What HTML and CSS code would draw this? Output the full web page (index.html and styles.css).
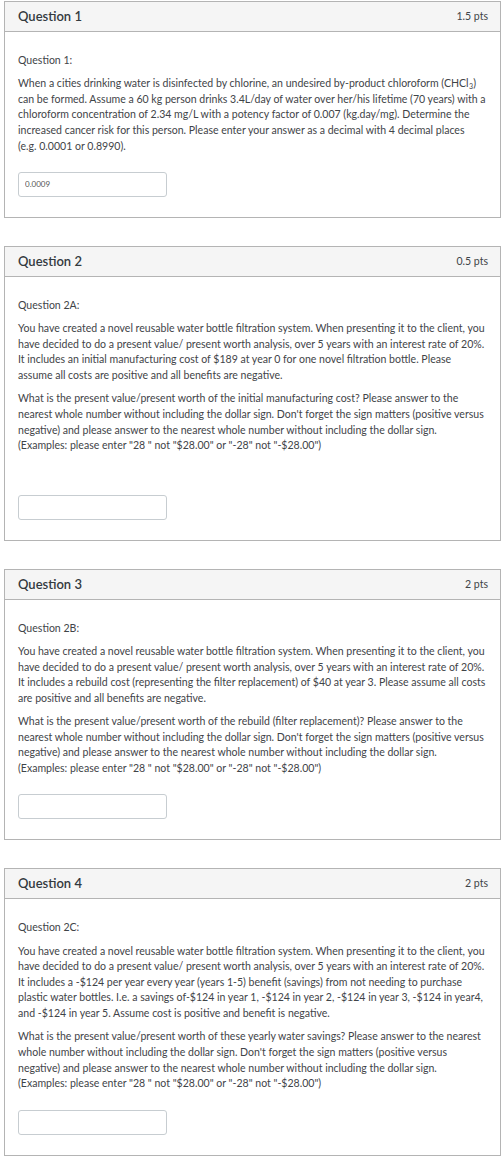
FILE: index.html
```html
<!DOCTYPE html>
<html lang="en">
<head>
<meta charset="utf-8">
<title>Quiz</title>
<link rel="stylesheet" href="styles.css">
</head>
<body>
<div class="quiz">
  <section class="question">
    <header class="q-header">
      <span class="q-name">Question 1</span>
      <span class="q-pts">1.5 pts</span>
    </header>
    <div class="q-body">
      <div class="q-text">
        <p>Question 1:</p>
        <p>When a cities drinking water is disinfected by chlorine, an undesired by-product chloroform (CHCl<sub>3</sub>) can be formed. Assume a 60 kg person drinks 3.4L/day of water over her/his lifetime (70 years) with a chloroform concentration of 2.34 mg/L with a potency factor of 0.007 (kg.day/mg). Determine the increased cancer risk for this person. Please enter your answer as a decimal with 4 decimal places (e.g.&nbsp;0.0001 or 0.8990).</p>
      </div>
      <div class="q-answer"><input class="q-input" type="text" value="0.0009"></div>
    </div>
  </section>

  <section class="question">
    <header class="q-header">
      <span class="q-name">Question 2</span>
      <span class="q-pts">0.5 pts</span>
    </header>
    <div class="q-body">
      <div class="q-text">
        <p>Question 2A:</p>
        <p>You have created a novel reusable water bottle filtration system. When presenting it to the client, you have decided to do a present value/ present worth analysis, over 5 years with an interest rate of 20%. It includes an initial manufacturing cost of $189 at year 0 for one novel filtration bottle. Please assume all costs are positive and all benefits are negative.</p>
        <p>What is the present value/present worth of the initial manufacturing cost? Please answer to the nearest whole number without including the dollar sign. Don't forget the sign matters (positive versus negative) and please answer to the nearest whole number without including the dollar sign. (Examples: please enter "28 " not "$28.00" or "-28" not "-$28.00")</p>
        <p class="empty">&nbsp;</p>
      </div>
      <div class="q-answer"><input class="q-input" type="text"></div>
    </div>
  </section>

  <section class="question">
    <header class="q-header">
      <span class="q-name">Question 3</span>
      <span class="q-pts">2 pts</span>
    </header>
    <div class="q-body">
      <div class="q-text">
        <p>Question 2B:</p>
        <p>You have created a novel reusable water bottle filtration system. When presenting it to the client, you have decided to do a present value/ present worth analysis, over 5 years with an interest rate of 20%. It includes a rebuild cost (representing the filter replacement) of $40 at year 3. Please assume all costs are positive and all benefits are negative.</p>
        <p>What is the present value/present worth of the rebuild (filter replacement)? Please answer to the nearest whole number without including the dollar sign. Don't forget the sign matters (positive versus negative) and please answer to the nearest whole number without including the dollar sign. (Examples: please enter "28 " not "$28.00" or "-28" not "-$28.00")</p>
      </div>
      <div class="q-answer"><input class="q-input" type="text"></div>
    </div>
  </section>

  <section class="question">
    <header class="q-header">
      <span class="q-name">Question 4</span>
      <span class="q-pts">2 pts</span>
    </header>
    <div class="q-body">
      <div class="q-text">
        <p>Question 2C:</p>
        <p>You have created a novel reusable water bottle filtration system. When presenting it to the client, you have decided to do a present value/ present worth analysis, over 5 years with an interest rate of 20%. It includes a -$124 per year every year (years 1-5) benefit (savings) from not needing to purchase plastic water bottles. I.e. a savings of-$124 in year 1, -$124 in year 2, -$124 in year 3, -$124 in year4, and -$124 in year 5. Assume cost is positive and benefit is negative.</p>
        <p>What is the present value/present worth of these yearly water savings? Please answer to the nearest whole number without including the dollar sign. Don't forget the sign matters (positive versus negative) and please answer to the nearest whole number without including the dollar sign. (Examples: please enter "28 " not "$28.00" or "-28" not "-$28.00")</p>
      </div>
      <div class="q-answer"><input class="q-input" type="text"></div>
    </div>
  </section>
</div>
</body>
</html>
```

FILE: styles.css
```css
html, body {
  margin: 0;
  padding: 0;
  background: #ffffff;
}

body {
  font-family: Lato, "Noto Sans", "Liberation Sans", sans-serif;
  color: #3f4448;
  font-size: 10.55px;
  line-height: 15.6px;
}

.quiz {
  padding: 1px 0 0 4px;
  display: flex;
  flex-direction: column;
  gap: 28px;
}

.question {
  border: 1px solid #b4b4b4;
  background: #ffffff;
}

.q-header {
  display: flex;
  justify-content: space-between;
  align-items: center;
  height: 29px;
  padding: 0 12px 0 13px;
  background: #f5f5f5;
  border-bottom: 1px solid #b4b4b4;
}

.q-name {
  font-size: 13px;
  font-weight: 600;
  color: #333a3f;
}

.q-pts {
  font-size: 10.55px;
  color: #3f4448;
}

.q-body {
  padding: 13px 13px 20px 13px;
}

.q-text p {
  margin: 7.8px 0;
}

.q-text sub {
  font-size: 7px;
  line-height: 7px;
  vertical-align: -2px;
  padding-left: 0.5px;
}

.q-answer {
  padding-top: 10px;
}

.q-input {
  display: block;
  box-sizing: border-box;
  width: 149px;
  height: 25px;
  margin: 0;
  padding: 0 6px;
  border: 1px solid #c7cdd1;
  border-radius: 3px;
  background: #ffffff;
  font-family: Lato, "Noto Sans", sans-serif;
  font-size: 8px;
  color: #555555;
  outline: none;
}
```
